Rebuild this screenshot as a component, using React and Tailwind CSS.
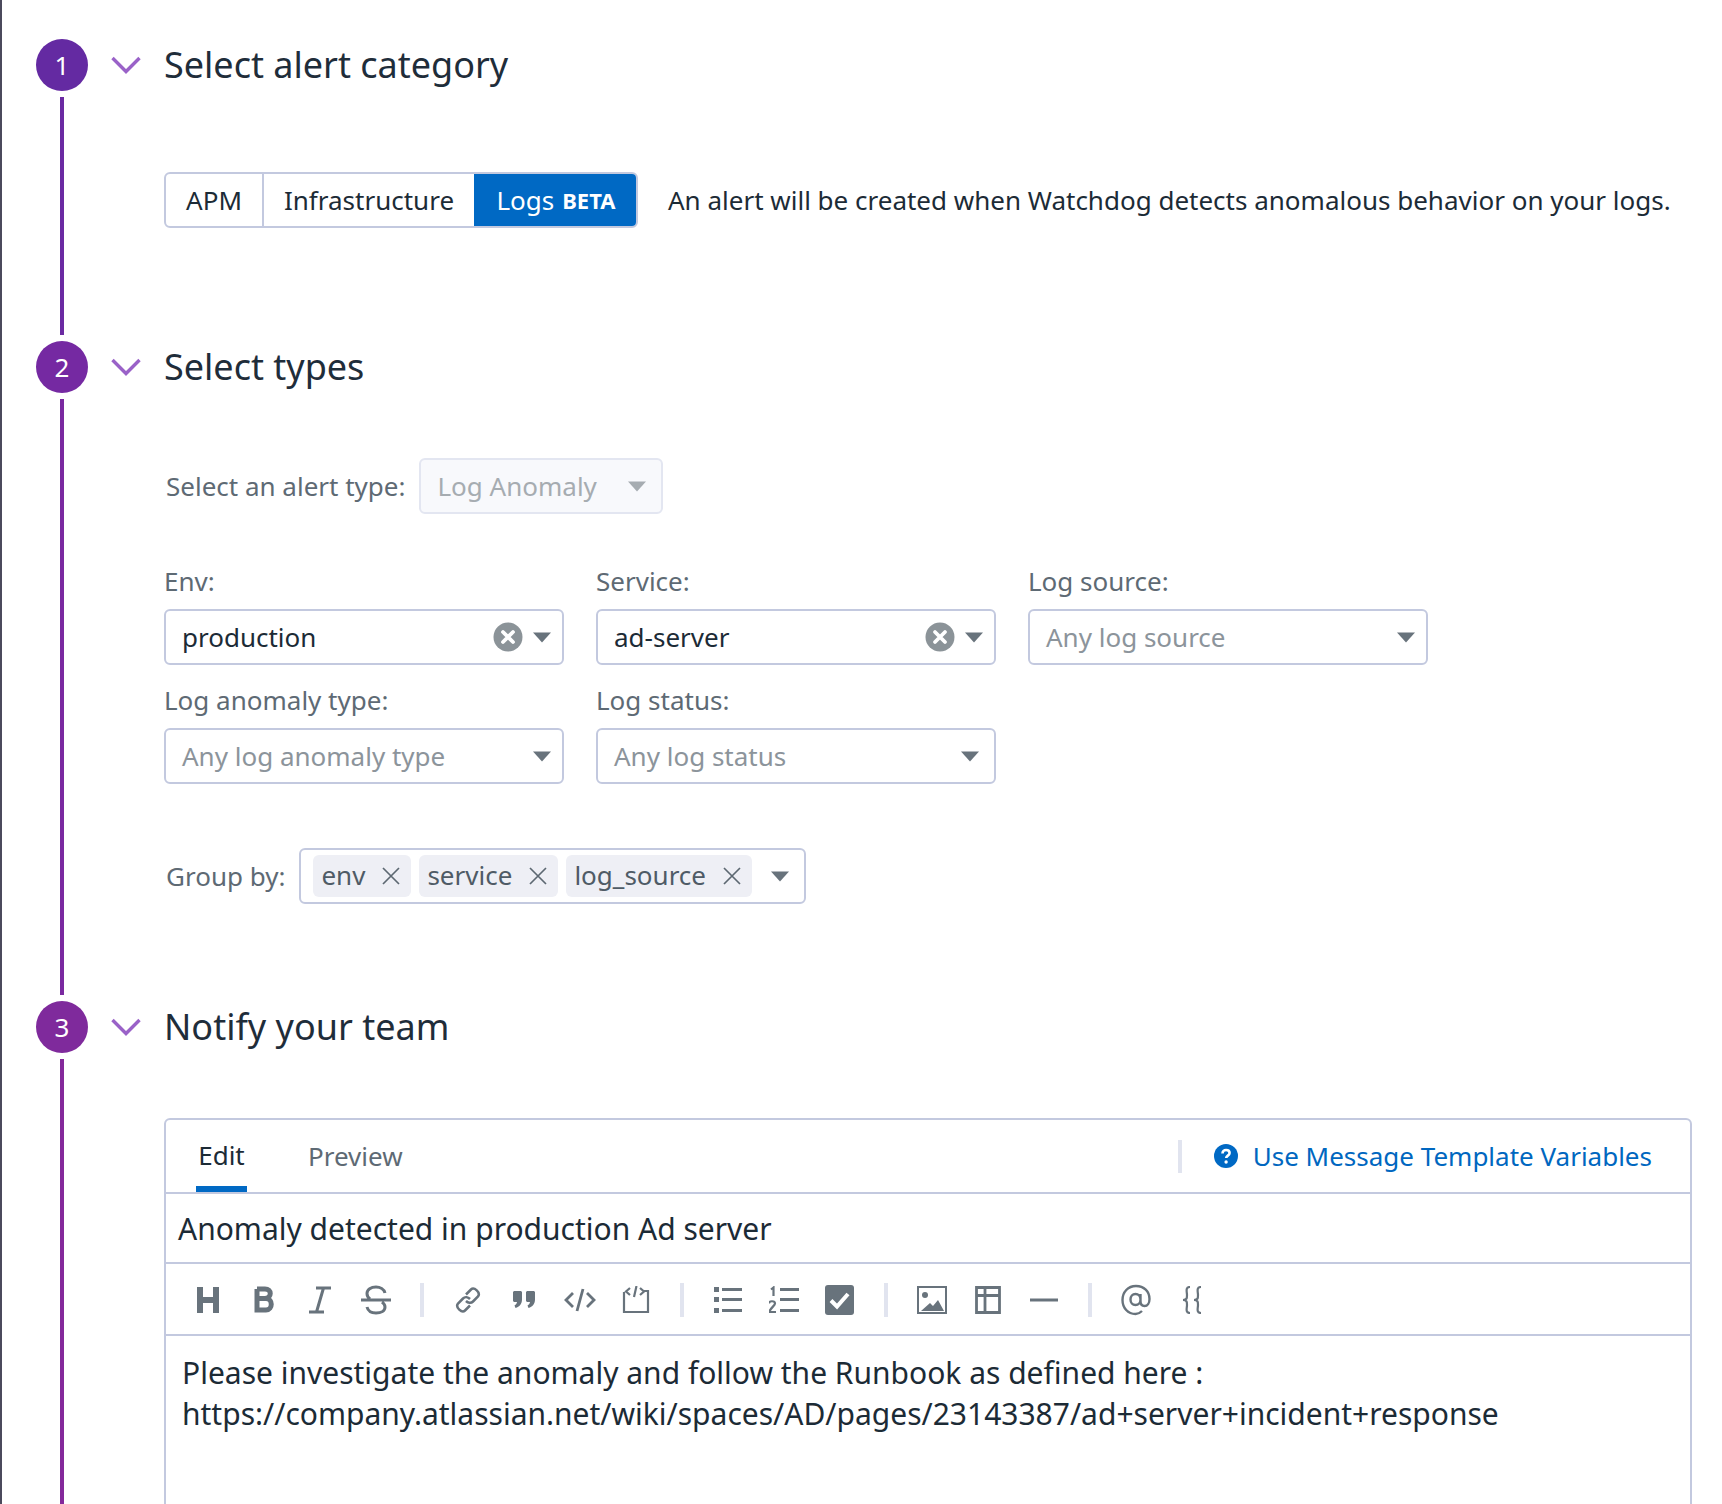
import React from 'react';

const Caret = ({ color = '#68737c' }) => (
  <svg width="18" height="11" viewBox="0 0 18 11" className="shrink-0">
    <path d="M0 0.5h18l-9 10z" fill={color} />
  </svg>
);

const Chevron = () => (
  <svg width="30" height="18" viewBox="0 0 30 18" fill="none" stroke="#9a62c8" strokeWidth="3.400" className="-ml-[1px]">
    <path d="M1.500 2 15 15.500 28.500 2" />
  </svg>
);

const ClearIcon = () => (
  <svg width="30" height="30" viewBox="0 0 30 30" className="shrink-0">
    <circle cx="15" cy="15" r="14.500" fill="#8b9398" />
    <path d="M10 10l10 10M20 10 10 20" stroke="#fff" strokeWidth="3.800" strokeLinecap="round" />
  </svg>
);

const TagX = () => (
  <svg width="18" height="18" viewBox="0 0 18 18" stroke="#5d6872" strokeWidth="1.700" className="shrink-0">
    <path d="M1 1l16 16M17 1 1 17" />
  </svg>
);

const Step = ({ n, title, circle, line, pb, children }) => (
  <div className="flex">
    <div className="flex w-[52px] shrink-0 flex-col items-center">
      <div className={`flex h-[52px] w-[52px] items-center justify-center rounded-full text-[26px] text-white ${circle}`}>{n}</div>
      <div className={`my-[6px] w-[4px] flex-1 ${line}`} />
    </div>
    <div className={`ml-[24px] min-w-0 flex-1 ${pb}`}>
      <div className="flex h-[52px] items-center">
        <div className="flex w-[52px] shrink-0"><Chevron /></div>
        <h2 className="text-[36px] leading-[52px] text-[#1f2d3a]">{title}</h2>
      </div>
      <div className="pl-[52px]">{children}</div>
    </div>
  </div>
);

const Select = ({ value, placeholder, clearable, pr = 'pr-[11px]' }) => (
  <div className={`flex h-[56px] w-[400px] items-center rounded-[6px] border-2 border-[#c3c9df] bg-white pl-[16px] ${pr}`}>
    <span className={`flex-1 text-[26px] ${placeholder ? 'text-[#8c949b]' : 'text-[#1c2b36]'}`}>{value}</span>
    {clearable && <span className="mr-[10px] flex"><ClearIcon /></span>}
    <Caret />
  </div>
);

const Field = ({ label, ...props }) => (
  <div>
    <div className="mb-[10px] h-[35px] text-[26px] leading-[35px] text-[#5e6a74]">{label}</div>
    <Select {...props} />
  </div>
);

const Tag = ({ children, w }) => (
  <div className={`flex h-[42px] items-center justify-between rounded-[6px] bg-[#eeeff5] pl-[8px] pr-[11px] text-[26px] text-[#4f5b66] ${w}`}>
    <span className="-mt-[2px]">{children}</span>
    <TagX />
  </div>
);

const ToolIcon = ({ w = 30, h = 30, children }) => (
  <div className="flex w-[56px] shrink-0 justify-center">
    <svg width={w} height={h} viewBox={`0 0 ${w} ${h}`} fill="none" stroke="#68737c" strokeWidth="3">
      {children}
    </svg>
  </div>
);

const ToolDivider = () => <div className="mx-[16px] h-[34px] w-[4px] shrink-0 bg-[#e1e4ef]" />;

export default function App() {
  return (
    <div className="h-[1504px] overflow-hidden border-l-[2px] border-[#4b4a5c] bg-white pl-[34px] pt-[39px] [font-family:'Noto_Sans',sans-serif]">
      <Step n="1" title="Select alert category" circle="bg-[#642aa2]" line="bg-[#6b2aa2]" pb="pb-[113px]">
        <div className="mt-[81px] flex items-center">
          <div className="flex h-[56px] w-[474px] overflow-hidden rounded-[6px] border-2 border-[#c3c9df] text-[26px] text-[#1c2b36]">
            <div className="flex w-[98px] items-center justify-center border-r-2 border-[#c3c9df]">APM</div>
            <div className="flex w-[210px] items-center justify-center">Infrastructure</div>
            <div className="-my-[2px] -mr-[2px] flex flex-1 items-center justify-center gap-[8px] bg-[#0069c4] text-white">
              Logs <span className="text-[22px] font-bold">BETA</span>
            </div>
          </div>
          <p className="ml-[30px] whitespace-nowrap text-[26px] text-[#1c2b36]">An alert will be created when Watchdog detects anomalous behavior on your logs.</p>
        </div>
      </Step>

      <Step n="2" title="Select types" circle="bg-[#7529a2]" line="bg-[#7a29a0]" pb="pb-[97px]">
        <div className="mt-[65px] flex items-center pl-[2px]">
          <span className="text-[26px] text-[#5e6a74]">Select an alert type:</span>
          <div className="ml-[14px] flex h-[56px] w-[244px] items-center rounded-[6px] border-2 border-[#e3e6f1] bg-[#f8f9fc] pl-[16px] pr-[15px]">
            <span className="flex-1 text-[26px] text-[#a6acb1]">Log Anomaly</span>
            <Caret color="#a6acb1" />
          </div>
        </div>

        <div className="mt-[50px] grid w-[1264px] grid-cols-[400px_400px_400px] gap-x-[32px] gap-y-[18px]">
          <Field label="Env:" value="production" clearable />
          <Field label="Service:" value="ad-server" clearable />
          <Field label="Log source:" value="Any log source" placeholder />
          <Field label="Log anomaly type:" value="Any log anomaly type" placeholder />
          <Field label="Log status:" value="Any log status" placeholder pr="pr-[15px]" />
        </div>

        <div className="mt-[64px] flex items-center pl-[2px]">
          <span className="text-[26px] text-[#5e6a74]">Group by:</span>
          <div className="ml-[14px] flex h-[56px] w-[507px] items-center gap-[8px] rounded-[6px] border-2 border-[#c3c9df] pl-[12px]">
            <Tag w="w-[98px]">env</Tag>
            <Tag w="w-[139px]">service</Tag>
            <Tag w="w-[186px]">log_source</Tag>
            <span className="ml-[11px] flex"><Caret /></span>
          </div>
        </div>
      </Step>

      <Step n="3" title="Notify your team" circle="bg-[#7f2a9c]" line="bg-[#84299b]">
        <div className="mt-[65px] h-[500px] w-[1528px] rounded-[6px] border-2 border-[#c3c9df]">
          <div className="flex h-[74px] border-b-2 border-[#c3c9df]">
            <div className="ml-[30px] flex h-[72px] w-[51px] items-center justify-center border-b-[6px] border-[#0069c4] pt-[4px] text-[26px] text-[#1c2b36]">Edit</div>
            <div className="ml-[61px] flex items-center text-[26px] text-[#5e6a74]">Preview</div>
            <div className="ml-auto flex items-center pr-[38px]">
              <div className="mr-[32px] h-[33px] w-[4px] bg-[#e1e4ef]" />
              <svg width="24" height="24" viewBox="0 0 24 24" className="mr-[15px]">
                <circle cx="12" cy="12" r="12" fill="#0069c4" />
                <path d="M8.500 9.500c0-2.200 1.500-3.500 3.600-3.500 2.100 0 3.500 1.300 3.500 3 0 2.700-3.400 2.600-3.400 5" fill="none" stroke="#fff" strokeWidth="2.600" />
                <circle cx="12.100" cy="18" r="1.700" fill="#fff" />
              </svg>
              <a className="text-[26px] text-[#0067c0]">Use Message Template Variables</a>
            </div>
          </div>
          <div className="flex h-[70px] items-center border-b-2 border-[#c3c9df] pl-[12px] text-[30px] text-[#1c2b36]">
            Anomaly detected in production Ad server
          </div>
          <div className="flex h-[72px] items-center border-b-2 border-[#c3c9df] pl-[14px] pt-[2px]">
            {/* heading, bold, italic, strike */}
            <ToolIcon w={22} h={28}><path d="M3 1v26M19 1v26M3 14h16" strokeWidth="6" /></ToolIcon>
            <ToolIcon w={20} h={28}><path d="M3 3h8c7 0 7 9 0 9.500H3M3 12.500h9c7 0 7 11.500 0 11.500H3V3" strokeWidth="5" /></ToolIcon>
            <ToolIcon w={24} h={28}><path d="M8 2h15M1 26h15M15.500 2 8.500 26" /></ToolIcon>
            <ToolIcon w={30} h={30}><path d="M0 15h30M24 8c-1-4-5-6-9-6-5 0-9 2.500-9 6.500 0 2 1 4 3 5.500M21 17c2 1.500 3 3 3 5 0 4-4 6-9 6s-8-2-9-6" /></ToolIcon>
            <ToolDivider />
            {/* link, quote, code, code block */}
            <ToolIcon w={28} h={28}><path d="M12 8.500 17 3.500c3-3 10 3 7 7l-5 5c-2 2-5 1.500-7-.500M16 19.500l-5 5c-3 3-10-3-7-7l5-5c2-2 5-1.500 7 .500" strokeWidth="2.500" /></ToolIcon>
            <ToolIcon w={22} h={18}>
              <path d="M1 0h7l1 1v7.500c0 4-2.500 7.500-6.500 8.500l-1-2.500c1.500-.8 2.300-2 2.500-3.500H1L0 10V1zM14 0h7l1 1v7.500c0 4-2.500 7.500-6.500 8.500l-1-2.500c1.500-.8 2.300-2 2.500-3.500H14l-1-1V1z" fill="#68737c" stroke="none" />
            </ToolIcon>
            <ToolIcon w={32} h={24}><path d="M9 5 2 12l7 7M23 5l7 7-7 7M19 1l-6 22" strokeWidth="2.800" /></ToolIcon>
            <ToolIcon w={28} h={28}><path d="M2 6v20h24V5h-5M8 2 4 5.500 8 9M18 2l4 3.500L18 9M14.500 0l-2.500 11" strokeWidth="2.200" /></ToolIcon>
            <ToolDivider />
            {/* lists */}
            <ToolIcon w={28} h={26}>
              <path d="M0 0h5v5H0zM0 10h5v5H0zM0 21h5v5H0z" fill="#68737c" stroke="none" />
              <path d="M8 2.500h20M8 12.500h20M8 23.500h20" strokeWidth="2.800" />
            </ToolIcon>
            <ToolIcon w={30} h={28}>
              <path d="M2 3.500 4.500 1.500V10M0 17.500c0-3 6-3 6 0 0 2-4 4-6 8.500h7" strokeWidth="2.200" />
              <path d="M11 3.500h19M11 13.500h19M11 24.500h19" strokeWidth="2.800" />
            </ToolIcon>
            <ToolIcon w={30} h={30}>
              <rect width="29" height="30" rx="3" fill="#68737c" stroke="none" />
              <path d="M6 15.500l6 6L23 9" stroke="#fff" strokeWidth="4" />
            </ToolIcon>
            <ToolDivider />
            {/* image, table, rule */}
            <ToolIcon w={30} h={28}>
              <rect x="1" y="1" width="28" height="26" strokeWidth="2" />
              <circle cx="8" cy="9" r="3" fill="#68737c" stroke="none" />
              <path d="M4 25l9-8 3 3 5-6 6 11z" fill="#68737c" stroke="none" />
            </ToolIcon>
            <ToolIcon w={26} h={28}><path d="M1.500 1.500h23v25h-23zM1.500 9.500h23M10 1.500v25" strokeWidth="2.800" /></ToolIcon>
            <ToolIcon w={28} h={4}><path d="M0 2h28" strokeWidth="3" /></ToolIcon>
            <ToolDivider />
            <ToolIcon w={30} h={32}><path d="M21 27c-2 2-4 3-6.500 3C7 30 1.500 24 1.500 16S7 2 15 2s13.500 5.500 13.500 13c0 4-2 7-5 7s-4-2-4-5v-7M19.500 15.500c0 3-2 5.500-5 5.500s-5-2.500-5-5.500 2-5.500 5-5.500 5 2.500 5 5.500z" strokeWidth="2.400" /></ToolIcon>
            <ToolIcon w={22} h={28}><path d="M9 1C4 1 6 6 6 9s0 5-4 5c4 0 4 2 4 5s-2 8 3 8M20 1c-5 0-3 5-3 8s0 5-4 5c4 0 4 2 4 5s-2 8 3 8" strokeWidth="2.200" /></ToolIcon>
          </div>
          <div className="px-[16px] pt-[16px] text-[30px] leading-[41px] text-[#1c2b36]">
            <div>Please investigate the anomaly and follow the Runbook as defined here :</div>
            <div>https://company.atlassian.net/wiki/spaces/AD/pages/23143387/ad+server+incident+response</div>
          </div>
        </div>
      </Step>
    </div>
  );
}
